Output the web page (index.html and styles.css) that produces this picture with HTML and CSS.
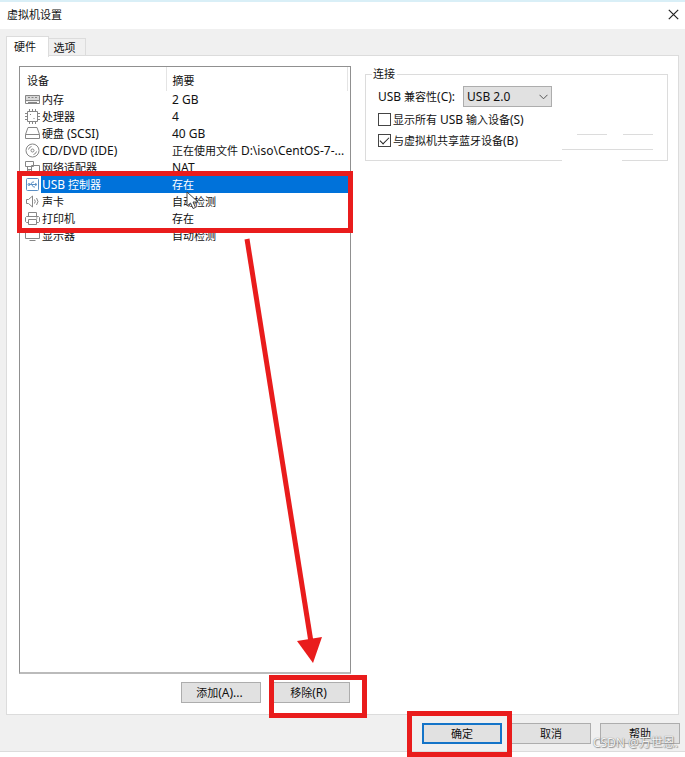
FILE: index.html
```
<!DOCTYPE html>
<html lang="zh-CN">
	<head>
		<meta charset="utf-8">
		<title>虚拟机设置</title>
		<link rel="stylesheet" href="styles.css">
	</head>
	<body>
		<div class="window">
			<div class="title">
				<h1>虚拟机设置</h1>
				<button class="close" type="button" aria-label="关闭">
					<svg width="11" height="11" viewBox="0 0 11 11"><path d="M.8.8l9.4 9.4M10.2.8L.8 10.2"/></svg>
				</button>
			</div>
			<div class="tabs">
				<button class="tab active" type="button">硬件</button>
				<button class="tab" type="button">选项</button>
			</div>
			<div class="panel">
				<div class="left">
					<div class="list">
						<table>
							<colgroup>
								<col class="c-icon">
								<col class="c-name">
								<col>
							</colgroup>
							<thead>
								<tr><th colspan="2">设备</th><th class="sum">摘要</th></tr>
							</thead>
							<tbody>
								<tr>
									<td><svg class="icon" viewBox="0 0 15 15"><path class="soft" d="M.5 3.500h14v6h-14z"/><path d="M.5 3.500h14v8h-14zM3 5.500h2M6.500 5.500h2M10 5.500h2M.5 8.500h14M3 10.500h9"/></svg></td>
									<td>内存</td><td class="sum en">2 GB</td>
								</tr>
								<tr>
									<td><svg class="icon" viewBox="0 0 15 15"><path d="M2.500 2.500h10v10h-10zM4.500 0v2M7.500 0v2M10.500 0v2M4.500 13v2M7.500 13v2M10.500 13v2M0 4.500h2M0 7.500h2M0 10.500h2M13 4.500h2M13 7.500h2M13 10.500h2M5.500 5v1M8.500 9.500h1"/></svg></td>
									<td>处理器</td><td class="sum en">4</td>
								</tr>
								<tr>
									<td><svg class="icon" viewBox="0 0 15 15"><path d="M3 1.500h9l2.500 7v4H.5v-4zM.5 8.500h14"/></svg></td>
									<td>硬盘 <span class="en">(SCSI)</span></td><td class="sum en">40 GB</td>
								</tr>
								<tr>
									<td><svg class="icon" viewBox="0 0 15 15"><circle cx="7.500" cy="7.500" r="6.500"/><circle cx="7.500" cy="7.500" r="1.500"/><path d="M3.500 6.500a4 4 0 0 1 3-3M11.500 8.500a4 4 0 0 1-3 3"/></svg></td>
									<td class="en">CD/DVD (IDE)</td><td class="sum">正在使用文件 <span class="en">D:\iso\CentOS-7-...</span></td>
								</tr>
								<tr>
									<td><svg class="icon" viewBox="0 0 15 15"><path d="M.5 1.500h8v5h-8zM6.500 5.500h8v6h-8zM8 13.500h5M2.500 7v4H5M2 9.500h4"/></svg></td>
									<td>网络适配器</td><td class="sum en">NAT</td>
								</tr>
								<tr class="selected">
									<td><svg class="icon usb" viewBox="0 0 15 15"><rect x="1.500" y="1.500" width="12" height="12" rx="1"/><path d="M4 7.500h7M5.500 7.500l2-2.500H9M6.500 7.500l2 2.500H10M10.500 6.500l1.500 1-1.500 1z"/><circle cx="4" cy="7.500" r="1"/></svg></td>
									<td><span class="en">USB</span> 控制器</td>
									<td class="sum">存在</td>
								</tr>
								<tr>
									<td><svg class="icon" viewBox="0 0 15 15"><path d="M1.500 5.500h2l4-3.500v11l-4-3.500h-2zM9.500 5.500q1.500 2 0 4M11.500 4q3 3.500 0 7"/></svg></td>
									<td>声卡</td><td class="sum">自动检测</td>
								</tr>
								<tr>
									<td><svg class="icon" viewBox="0 0 15 15"><path d="M3.500 5v-3.500h8V5M3.500 11.500h-2l-1-1v-4l1-1h12l1 1v4l-1 1h-2M3.500 8.500h8v5h-8zM11 7h1.500"/></svg></td>
									<td>打印机</td><td class="sum">存在</td>
								</tr>
								<tr>
									<td><svg class="icon" viewBox="0 0 15 15"><path d="M.5 1.500h14v9H.5zM4.500 12.500h6"/></svg></td>
									<td>显示器</td><td class="sum">自动检测</td>
								</tr>
							</tbody>
						</table>
						<svg class="cursor" width="13" height="19" viewBox="0 0 13 19"><path d="M1 1v14l3.500-3 2.500 5.500 2.500-1-2.500-5.500h5z"/></svg>
						<div class="mark mark-rows"></div>
						<svg class="arrow" width="82" height="426" viewBox="0 0 82 426"><path class="shaft" d="M4 2l64 403"/><path class="head" d="M54 404l25-4-9 26z"/></svg>
					</div>
					<div class="actions">
						<button class="btn" type="button">添加<span class="en">(A)...</span></button>
						<div class="marked">
							<button class="btn" type="button">移除<span class="en">(R)</span></button>
							<div class="mark mark-remove"></div>
						</div>
					</div>
				</div>
				<fieldset>
					<legend>连接</legend>
					<div class="row">
						<label for="compat"><span class="en">USB</span> 兼容性<span class="en">(C):</span></label>
						<div class="drop">
							<select id="compat" class="en">
								<option>USB 1.1</option>
								<option selected>USB 2.0</option>
								<option>USB 3.1</option>
							</select>
							<svg width="9" height="6" viewBox="0 0 9 6"><path d="M.5.8l4 4 4-4"/></svg>
						</div>
					</div>
					<div class="check">
						<input type="checkbox" id="show">
						<label for="show">显示所有 <span class="en">USB</span> 输入设备<span class="en">(S)</span></label>
					</div>
					<div class="check">
						<input type="checkbox" id="share" checked>
						<label for="share">与虚拟机共享蓝牙设备<span class="en">(B)</span></label>
					</div>
					<svg class="lines" width="92" height="30" viewBox="0 0 92 30"><path class="gap" d="M0 27.500h60"/><path d="M15 1.500h30M61 1.500h30M0 16.500h91"/></svg>
				</fieldset>
			</div>
			<div class="footer">
				<div class="marked">
					<button class="btn primary" type="button">确定</button>
					<div class="mark mark-ok"></div>
				</div>
				<button class="btn" type="button">取消</button>
				<button class="btn" type="button">帮助</button>
				<span class="watermark">CSDN @万世恩.</span>
			</div>
		</div>
	</body>
</html>
```

FILE: styles.css
```
*{
	margin: 0;
	padding: 0;
	box-sizing: border-box;
}
body{
	min-height: 100vh;
	padding-bottom: 5px;
	background-color: #fff;
	color: #111;
	font-family: "Noto Sans", "Noto Sans CJK SC", sans-serif;
	font-size: 11px;
	line-height: 16px;
}
button, select{
	font: inherit;
	color: inherit;
}
.en{
	font-size: 12px;
}
.window{
	display: flex;
	flex-direction: column;
	min-height: calc(100vh - 5px);
	background-color: #f0f0f0;
	border-top: 2px solid #d9eff7;
	border-bottom: 1px solid #dcdcdc;
}
.title{
	display: flex;
	justify-content: space-between;
	align-items: center;
	height: 27px;
	padding: 0 6px 2px 7px;
	background-color: #fff;
}
.title h1{
	font-size: 11px;
	font-weight: normal;
}
.close{
	display: flex;
	border: none;
	background: none;
}
.close path{
	stroke: #222;
	stroke-width: 1.2;
}
.tabs{
	display: flex;
	align-items: flex-end;
	height: 27px;
	padding-left: 6px;
}
.tab{
	height: 18px;
	width: 37px;
	padding-right: 5px;
	border: 1px solid #dcdcdc;
	border-left: none;
	border-bottom: none;
	background-color: #f0f0f0;
}
.tab.active{
	position: relative;
	width: 43px;
	height: 21px;
	margin-bottom: -1px;
	padding-bottom: 1px;
	border-left: 1px solid #dcdcdc;
	background-color: #fff;
}
.panel{
	flex: 1;
	display: grid;
	grid-template-columns: minmax(0, 332fr) minmax(0, 303fr);
	gap: 14px;
	margin: -1px 6px 0 6px;
	padding: 10px 10px 11px 12px;
	border: 1px solid #dcdcdc;
	background-color: #fff;
}
.left{
	display: flex;
	flex-direction: column;
}
.list{
	position: relative;
	flex: 1;
	border: 1px solid #909090;
	border-bottom: 2px solid #bbb;
	padding-right: 2px;
}
table{
	width: 100%;
	table-layout: fixed;
	border-collapse: collapse;
}
.c-icon{
	width: 21px;
}
.c-name{
	width: 125px;
}
th{
	height: 24px;
	padding: 3px 0 0 7px;
	font-weight: normal;
	text-align: left;
}
th.sum{
	border-left: 1px solid #e4e4e4;
	border-right: 1px solid #e4e4e4;
}
td{
	height: 17px;
	padding-left: 1px;
	white-space: nowrap;
}
.sum{
	padding-left: 6px;
}
td:first-child{
	padding-left: 5px;
}
.selected td + td{
	background-color: #0072da;
	color: #fff;
}
.icon{
	display: block;
	width: 15px;
	height: 15px;
	fill: none;
	stroke: #868686;
}
.icon .soft{
	fill: #d8d8d8;
	stroke: none;
}
.usb{
	stroke: #5b8fc4;
}
.cursor{
	position: absolute;
	left: 166px;
	top: 124px;
	fill: #fff;
	stroke: #444;
}
.mark{
	position: absolute;
	border: 5px solid #e91c1c;
	pointer-events: none;
}
.mark-rows{
	left: -3px;
	right: -3px;
	top: 104px;
	height: 62px;
}
.arrow{
	position: absolute;
	left: 223px;
	top: 170px;
}
.shaft{
	stroke: #e91c1c;
	stroke-width: 5;
}
.head{
	fill: #e91c1c;
}
.actions{
	display: flex;
	justify-content: flex-end;
	gap: 9px;
	padding: 8px 1px 0 0;
}
.marked{
	position: relative;
	z-index: 1;
}
.mark-remove{
	left: -1px;
	right: -17px;
	top: -7px;
	bottom: -15px;
}
.mark-ok{
	left: -15px;
	right: -10px;
	top: -12px;
	bottom: -13px;
}
.btn{
	display: block;
	width: 80px;
	height: 21px;
	padding-right: 3px;
	border: 1px solid #adadad;
	background-color: #e1e1e1;
}
.footer .btn{
	padding-right: 0;
}
.footer .primary{
	border: 2px solid #1474c8;
}
fieldset{
	position: relative;
	align-self: start;
	height: 95px;
	padding: 4px 12px 0 12px;
	border: 1px solid #dcdcdc;
}
legend{
	margin-left: -6px;
	padding: 0 2px 0 1px;
}
.row{
	display: flex;
	align-items: center;
	gap: 8px;
	margin-bottom: 2px;
}
.drop{
	position: relative;
}
.drop select{
	display: block;
	width: 89px;
	height: 21px;
	padding-left: 3px;
	border: 1px solid #adadad;
	background-color: #e1e1e1;
	appearance: none;
}
.drop svg{
	position: absolute;
	right: 4px;
	top: 8px;
	fill: none;
	stroke: #555;
	pointer-events: none;
}
.check{
	display: flex;
	align-items: center;
	gap: 2px;
	height: 21px;
}
.check input{
	width: 13px;
	height: 13px;
	border: 1px solid #444;
	background-color: #fff;
	appearance: none;
}
.check input:checked::before{
	content: "";
	display: block;
	width: 8px;
	height: 4px;
	margin: 2px 0 0 1px;
	border-left: 1px solid #222;
	border-bottom: 1px solid #222;
	transform: rotate(-45deg);
}
.lines{
	position: absolute;
	right: 13px;
	bottom: -3px;
	stroke: #dcdcdc;
}
.lines .gap{
	stroke: #fff;
	stroke-width: 3;
}
.footer{
	position: relative;
	display: flex;
	justify-content: flex-end;
	gap: 9px;
	padding: 8px 5px 7px 0;
}
.watermark{
	position: absolute;
	right: 7px;
	bottom: 0;
	color: #f4f4f4;
	font-size: 12px;
	text-shadow: 0 0 1px #666, 1px 1px 1px #999;
	pointer-events: none;
}
```
